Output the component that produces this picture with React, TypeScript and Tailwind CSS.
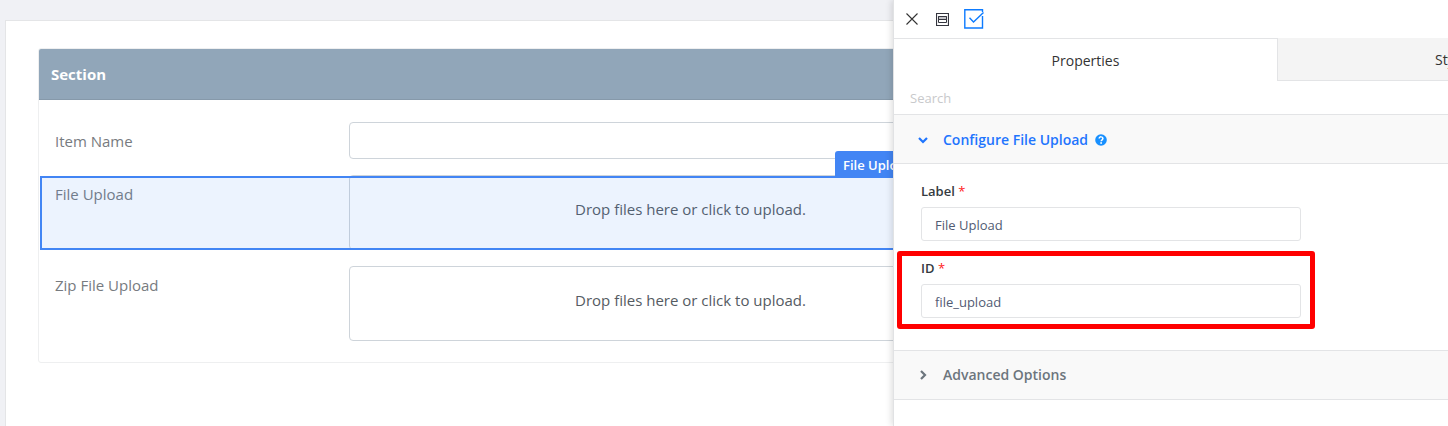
import React, { useState } from "react";

type DropFieldProps = { id: string; label: string; selected?: boolean };

function DropField({ id, label, selected }: DropFieldProps) {
  return (
    <div className="relative flex">
      <label htmlFor={id} className="w-[294px] shrink-0 pt-[9px] leading-5 text-[#777b80]">
        {label}
      </label>
      <button
        id={id}
        type="button"
        className="flex h-[75px] flex-1 items-start justify-center rounded-[4px] border border-[#ced4da] bg-white pt-[23px] leading-5 text-[#555b62]"
      >
        Drop files here or click to upload.
      </button>
      {selected && (
        <div className="pointer-events-none absolute -left-[15px] -right-3 bottom-0 top-px border-2 border-[#4285f4] bg-[#4285f4]/10">
          <span className="absolute -top-[27px] right-[121px] rounded-t-[3px] bg-[#4285f4] px-2 pt-px text-[13px] font-semibold leading-[26px] text-white">
            File Upload
          </span>
        </div>
      )}
    </div>
  );
}

function TextField(props: { id: string; label: string; initial: string }) {
  const [value, setValue] = useState(props.initial);
  return (
    <div>
      <label htmlFor={props.id} className="block text-[13px] font-semibold leading-8 text-[#343a40]">
        {props.label} <span className="font-normal text-[#ff2020]">*</span>
      </label>
      <input
        id={props.id}
        value={value}
        onChange={(e) => setValue(e.target.value)}
        className="block h-[34px] w-full rounded-[3px] border border-[#e3e4e6] bg-white px-[13px] pt-0.5 text-[13px] text-[#515b73] outline-none"
      />
    </div>
  );
}

function Chevron({ className }: { className: string }) {
  return (
    <svg viewBox="0 0 10 10" className={className} fill="none" stroke="currentColor" strokeWidth="2.2">
      <path d="M1 3l4 4 4-4" />
    </svg>
  );
}

export default function App() {
  return (
    <div className="relative min-h-screen overflow-hidden bg-[#f0f1f5] font-['Open_Sans','Noto_Sans',sans-serif] text-sm">
      <main className="flex min-h-screen pl-[5px] pt-5">
        <div className="flex-1 border-l border-t border-[#e4e5e7] bg-white pl-8 pr-[403px] pt-[27px]">
          <section className="rounded-[3px] border border-[#eeeff0] text-[15px]">
            <h2 className="rounded-t-[2px] border-b border-[#8699aa] bg-[#91a6b9] px-3 font-bold leading-[50px] text-white">
              Section
            </h2>
            <div className="flex flex-col gap-4 pb-[21px] pl-4 pr-3 pt-[22px]">
              <div className="flex">
                <label htmlFor="item" className="w-[294px] shrink-0 pt-[9px] leading-5 text-[#777b80]">
                  Item Name
                </label>
                <input id="item" className="h-[37px] min-w-0 flex-1 rounded-[4px] border border-[#ced4da] bg-white px-3 outline-none" />
              </div>
              <DropField id="file" label="File Upload" selected />
              <DropField id="zip" label="Zip File Upload" />
            </div>
          </section>
        </div>
      </main>

      <aside className="absolute inset-y-0 right-0 w-[555px] border-l border-[#e1e2e4] bg-white shadow-[-2px_0_6px_rgba(0,0,0,0.12)]">
        <div className="flex h-[38px] items-center pl-3">
          <button type="button" aria-label="Close" className="text-[#333]">
            <svg viewBox="0 0 12 12" className="h-3 w-3" fill="none" stroke="currentColor" strokeWidth="1.1">
              <path d="M0.5 0.5l11 11M11.5 0.5l-11 11" />
            </svg>
          </button>
          <button type="button" aria-label="Layout" className="ml-[18px] text-[#35363f]">
            <svg viewBox="0 0 13 13" className="h-[13px] w-[13px]" fill="none" stroke="currentColor">
              <path d="M0.5 0.5h12v12h-12z" strokeWidth="1.2" />
              <path d="M2.500 3.500h8v6h-8z" fill="#fff" />
              <path d="M2.500 3.500h8v3h-8z" fill="#c4c4c8" />
            </svg>
          </button>
          <button type="button" aria-label="Select" className="ml-[15px] text-[#0d7bff]">
            <svg viewBox="0 0 20 20" className="h-5 w-5" fill="none" stroke="currentColor" strokeWidth="1.4">
              <path d="M18.500 3V0.800H0.800v18.200h17.700V7" />
              <path d="M5.500 8.800l4 4.200 10-9.500" />
            </svg>
          </button>
        </div>

        <div className="flex overflow-hidden text-sm text-[#333]">
          <button type="button" className="h-[43px] w-[384px] shrink-0 border-r border-t border-[#e3e4e6] pt-px leading-[42px]">
            Properties
          </button>
          <button type="button" className="h-[43px] flex-1 overflow-hidden border-b border-[#e3e4e6] bg-[#f4f4f4] pl-[157px] pt-px text-left leading-[42px]">
            Styles
          </button>
        </div>

        <input
          type="search"
          aria-label="Search"
          placeholder="Search"
          className="block h-[34px] w-full border-b border-[#e3e4e6] px-4 text-[13px] outline-none placeholder:text-[#c8c9cb]"
        />

        <button type="button" className="flex h-[49px] w-full items-center border-b border-[#e3e4e6] bg-[#f9f9f9] pl-6 pt-px font-semibold text-[#1f75fe]">
          <Chevron className="mr-[15px] h-[10px] w-[10px]" />
          Configure File Upload
          <svg viewBox="0 0 12 12" className="ml-[7px] h-3 w-3">
            <circle cx="6" cy="6" r="5.8" fill="#1890ff" />
            <path d="M4.2 4.6c0-2.4 3.7-2.2 3.7 0C7.900 5.900 6.200 5.800 6.200 7.300" fill="none" stroke="#fff" strokeWidth="1.5" />
            <circle cx="6.1" cy="9" r="0.9" fill="#fff" />
          </svg>
        </button>

        <div className="border-b border-[#e3e4e6] pb-8 pt-[11px]">
          <div className="relative flex w-[407px] flex-col gap-[11px] pl-[27px]">
            <TextField id="label" label="Label" initial="File Upload" />
            <TextField id="ident" label="ID" initial="file_upload" />
            <div className="pointer-events-none absolute -bottom-[11px] -right-[14px] left-[3px] h-[78px] rounded-[3px] border-[5px] border-[#ff0000]" />
          </div>
        </div>

        <button type="button" className="flex h-[49px] w-full items-center border-b border-[#e3e4e6] bg-[#f9f9f9] pl-6 font-semibold text-[#6c757d]">
          <Chevron className="mr-[15px] h-[10px] w-[10px] -rotate-90" />
          Advanced Options
        </button>
      </aside>
    </div>
  );
}
